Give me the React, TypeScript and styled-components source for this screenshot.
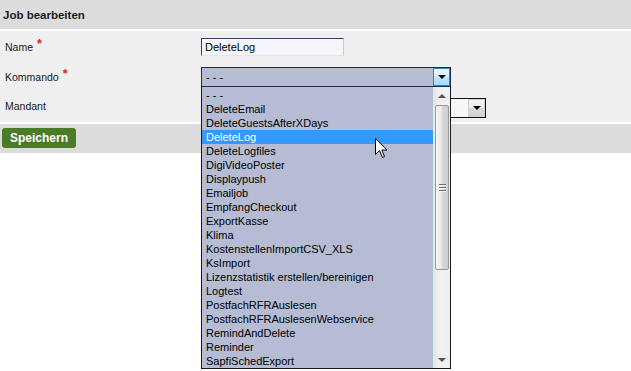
import React from "react";
import styled, { createGlobalStyle } from "styled-components";

const GlobalStyle = createGlobalStyle`
  body {
    margin: 0;
    background: #ffffff;
    font-family: "Liberation Sans", Arial, sans-serif;
  }
`;

const Page = styled.div`
  position: relative;
  width: 631px;
  height: 371px;
  overflow: hidden;
  background: #ffffff;
`;

const HeaderBar = styled.div`
  height: 29px;
  background: #dcdcdc;
  border-bottom: 2px solid #ffffff;
  display: flex;
  align-items: center;
  padding-left: 3px;
  font-size: 11.5px;
  font-weight: bold;
  color: #1a1a1a;
`;

const FormArea = styled.div`
  display: grid;
  grid-template-columns: 196px 1fr;
  grid-template-rows: 18px 20px 20px;
  row-gap: 11px;
  padding: 7px 0 4px 5px;
  background: #efefef;
  border-bottom: 2px solid #ffffff;
`;

const Label = styled.div<{ $lift?: number }>`
  display: flex;
  align-items: center;
  font-size: 10.5px;
  color: #1a1a1a;
  padding-bottom: ${(p) => p.$lift || 0}px;
`;

const Required = styled.span`
  color: #e3201b;
  font-size: 12.5px;
  font-weight: bold;
  margin-left: 4px;
  position: relative;
  top: -3px;
`;

const Field = styled.div`
  position: relative;
  display: flex;
  align-items: stretch;
`;

const TextInput = styled.div`
  box-sizing: border-box;
  width: 143px;
  height: 18px;
  background: #f5f6fa;
  border: 1px solid;
  border-color: #34406a #c9cdd8 #e3e5ec #34406a;
  font-size: 11px;
  line-height: 16px;
  padding-left: 3px;
  color: #000;
`;

const Select = styled.div<{ $width: number; $active?: boolean }>`
  box-sizing: border-box;
  width: ${(p) => p.$width}px;
  height: 20px;
  display: flex;
  border: 1px solid ${(p) => (p.$active ? "#1b2a5a" : "#111")};
  background: ${(p) => (p.$active ? "#b6bdd3" : "#f5f6fa")};
`;

const SelectValue = styled.div`
  flex: 1;
  font-size: 11px;
  line-height: 18px;
  padding-left: 4px;
  color: #000;
`;

const ArrowButton = styled.div<{ $hover?: boolean }>`
  box-sizing: border-box;
  width: 17px;
  height: 18px;
  display: flex;
  align-items: center;
  justify-content: center;
  border: 1px solid ${(p) => (p.$hover ? "#3c7fb1" : "#d0d0d0")};
  background: ${(p) =>
    p.$hover
      ? "linear-gradient(#eaf6fd, #d9f0fc 50%, #bee6fd 51%, #a7d9f5)"
      : "linear-gradient(#f2f2f2, #ebebeb 50%, #dddddd 51%, #cfcfcf)"};
`;

const Triangle = styled.div<{ $up?: boolean; $color?: string }>`
  width: 0;
  height: 0;
  border-left: 4px solid transparent;
  border-right: 4px solid transparent;
  ${(p) =>
    p.$up
      ? `border-bottom: 4px solid ${p.$color || "#000"};`
      : `border-top: 4px solid ${p.$color || "#000"};`}
`;

const ButtonBar = styled.div`
  height: 29px;
  background: #dcdcdc;
  padding: 4px 0 0 2px;
  box-sizing: border-box;
`;

const SaveButton = styled.button`
  width: 74px;
  height: 20px;
  border: none;
  border-radius: 3px;
  background: #4a7b27;
  color: #ffffff;
  font-family: "Liberation Sans", Arial, sans-serif;
  font-size: 12px;
  font-weight: bold;
  padding: 0;
`;

const DropList = styled.div`
  position: absolute;
  top: 100%;
  left: 0;
  z-index: 5;
  box-sizing: border-box;
  width: 250px;
  height: 282px;
  padding-top: 1px;
  display: flex;
  background: #b5bcd3;
  border: 1px solid #1a1a1a;
  border-top: none;
`;

const Items = styled.div`
  flex: 1;
  display: flex;
  flex-direction: column;
`;

const Item = styled.div<{ $selected?: boolean }>`
  height: 14px;
  line-height: 14px;
  font-size: 11px;
  padding-left: 4px;
  white-space: nowrap;
  color: ${(p) => (p.$selected ? "#ffffff" : "#000000")};
  background: ${(p) => (p.$selected ? "#3399ff" : "transparent")};
`;

const ScrollBar = styled.div`
  width: 16px;
  display: flex;
  flex-direction: column;
  background: linear-gradient(90deg, #e6e6e6, #f2f2f2 40%, #f0f0f0);
  border-left: 1px solid #e8e8e8;
  margin-top: -1px;
`;

const ScrollArrow = styled.div`
  height: 17px;
  display: flex;
  align-items: center;
  justify-content: center;
`;

const Track = styled.div`
  flex: 1;
  padding-top: 1px;
`;

const Thumb = styled.div`
  box-sizing: border-box;
  margin: 0 1px;
  height: 165px;
  border: 1px solid #9a9a9a;
  border-radius: 2px;
  background: linear-gradient(90deg, #f4f4f4, #e9e9e9 45%, #d6d6d6 55%, #cfcfcf);
  display: flex;
  flex-direction: column;
  align-items: center;
  justify-content: center;
  gap: 1px;
`;

const Grip = styled.div`
  width: 7px;
  height: 1px;
  background: #6e6e6e;
  border-bottom: 1px solid #f6f6f6;
`;

const Cursor = styled.svg`
  position: absolute;
  left: 375px;
  top: 138px;
  z-index: 10;
`;

const commands = [
  "- - -",
  "DeleteEmail",
  "DeleteGuestsAfterXDays",
  "DeleteLog",
  "DeleteLogfiles",
  "DigiVideoPoster",
  "Displaypush",
  "Emailjob",
  "EmpfangCheckout",
  "ExportKasse",
  "Klima",
  "KostenstellenImportCSV_XLS",
  "KsImport",
  "Lizenzstatistik erstellen/bereinigen",
  "Logtest",
  "PostfachRFRAuslesen",
  "PostfachRFRAuslesenWebservice",
  "RemindAndDelete",
  "Reminder",
  "SapfiSchedExport",
];

const App = () => {
  return (
    <Page>
      <GlobalStyle />
      <HeaderBar>Job bearbeiten</HeaderBar>
      <FormArea>
        <Label>
          Name<Required>*</Required>
        </Label>
        <Field>
          <TextInput>DeleteLog</TextInput>
        </Field>
        <Label>
          Kommando<Required>*</Required>
        </Label>
        <Field>
          <Select $width={250} $active>
            <SelectValue>- - -</SelectValue>
            <ArrowButton $hover>
              <Triangle />
            </ArrowButton>
          </Select>
          <DropList>
            <Items>
              {commands.map((c) => (
                <Item key={c} $selected={c === "DeleteLog"}>
                  {c}
                </Item>
              ))}
            </Items>
            <ScrollBar>
              <ScrollArrow>
                <Triangle $up $color="#555" />
              </ScrollArrow>
              <Track>
                <Thumb>
                  <Grip />
                  <Grip />
                  <Grip />
                </Thumb>
              </Track>
              <ScrollArrow>
                <Triangle $color="#555" />
              </ScrollArrow>
            </ScrollBar>
          </DropList>
        </Field>
        <Label $lift={4}>Mandant</Label>
        <Field>
          <Select $width={285}>
            <SelectValue />
            <ArrowButton>
              <Triangle />
            </ArrowButton>
          </Select>
        </Field>
      </FormArea>
      <ButtonBar>
        <SaveButton>Speichern</SaveButton>
      </ButtonBar>
      <Cursor width="13" height="21" viewBox="0 0 13 21">
        <path
          d="M0.5 0.5 L0.5 16.5 L4.5 12.5 L7.5 19.5 L9.5 18.5 L6.8 12 L12 12 Z"
          fill="#ffffff"
          stroke="#000000"
          strokeWidth="1"
          strokeLinejoin="miter"
        />
      </Cursor>
    </Page>
  );
};

export default App;
